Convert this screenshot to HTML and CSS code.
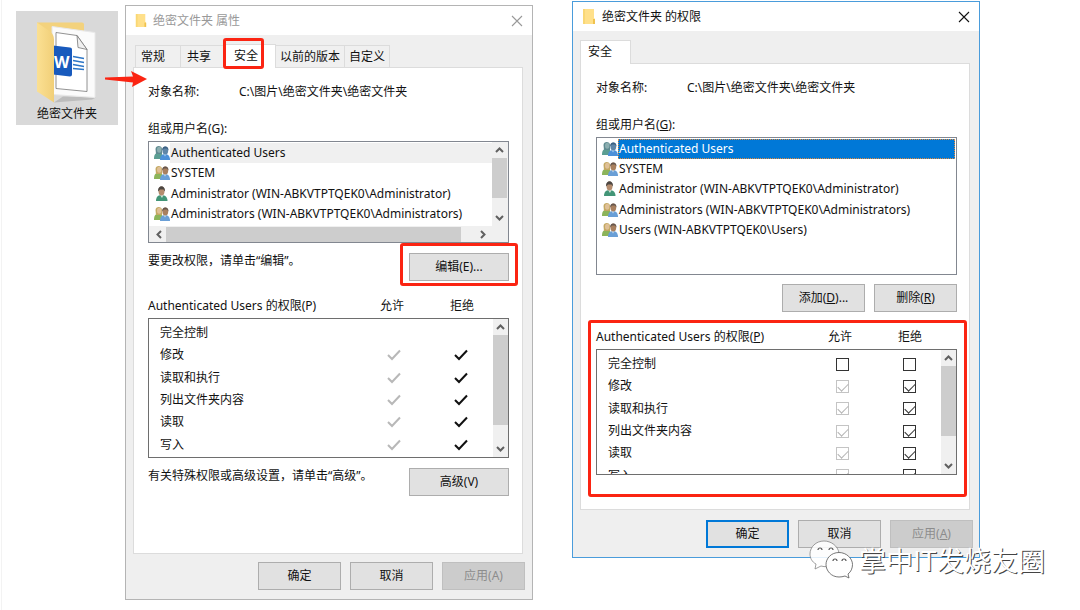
FILE: index.html
```html
<!DOCTYPE html>
<html lang="zh-CN">
<head>
<meta charset="utf-8">
<meta name="viewport" content="width=device-width, initial-scale=1">
<title>绝密文件夹 属性</title>
<link rel="stylesheet" href="styles.css">
</head>
<body>
<svg class="defs" aria-hidden="true">
  <symbol id="up" viewBox="0 0 15 16"><path d="M4 10 7.500 6.500 11 10" fill="none" stroke="#606060" stroke-width="2"/></symbol>
  <symbol id="down" viewBox="0 0 15 16"><path d="M4 6 7.500 9.500 11 6" fill="none" stroke="#606060" stroke-width="2"/></symbol>
  <symbol id="left" viewBox="0 0 16 15"><path d="M11 4 7.500 7.500 11 11" fill="none" stroke="#606060" stroke-width="2"/></symbol>
  <symbol id="right" viewBox="0 0 16 15"><path d="M6 4 9.500 7.500 6 11" fill="none" stroke="#606060" stroke-width="2"/></symbol>
  <symbol id="close" viewBox="0 0 12 12"><path d="M1 1 11 11M11 1 1 11" fill="none" stroke="currentColor" stroke-width="1.100"/></symbol>
  <symbol id="tick" viewBox="0 0 16 14"><path d="M2 7 6 11 14 2.500" fill="none" stroke="currentColor" stroke-width="2"/></symbol>
  <symbol id="folder" viewBox="0 0 14 15"><path d="M1 0h11v9l1 1v5H1z" fill="#ffe08a"/><path d="M1 0h2v15H1z" fill="#f9d775"/><path d="M11 10h2v5h-2z" fill="#f0c24e"/></symbol>
  <symbol id="group" viewBox="0 0 16 15">
    <path d="M0 14C0 10 1 8 4.500 8S9 9.500 9 14z" fill="#8cb45a"/>
    <path d="M1.500 4C1.500 0 8 0 8 4V9H2z" fill="#c3a862"/><ellipse cx="5.200" cy="4.800" rx="2.200" ry="3" fill="#dfc096"/>
    <path d="M6 15C6 11 8 9 11 9s5 2 5 6z" fill="#6a9fd6"/><path d="M9.500 9h3L11 11.500z" fill="#c6dcef"/>
    <ellipse cx="11.300" cy="5.500" rx="2.900" ry="3.900" fill="#a9805f"/><path d="M8.200 5.500C7.500 0 15 0 14.500 5.500L13 3.500H10z" fill="#66564d"/>
  </symbol>
  <symbol id="auth" viewBox="0 0 16 15">
    <path d="M0 14C0 10 1 8 4.500 8S9 9.500 9 14z" fill="#5b9e92"/>
    <path d="M1.500 4C1.500 0 8 0 8 4V9H2z" fill="#5f8a90"/><ellipse cx="5.200" cy="4.800" rx="2.200" ry="3" fill="#8caeb0"/>
    <path d="M6 15C6 11 8 9 11 9s5 2 5 6z" fill="#4c90d8"/><path d="M9.500 9h3L11 11.500z" fill="#a8cff0"/>
    <ellipse cx="11.300" cy="5.500" rx="2.900" ry="3.900" fill="#5f86a8"/><path d="M8.200 5.500C7.500 0 15 0 14.500 5.500L13 3.500H10z" fill="#3c6183"/>
  </symbol>
  <symbol id="user" viewBox="0 0 16 15">
    <path d="M2 15C2 11 4 9 7.500 9s6 2 6 6z" fill="#429577"/><path d="M6 9h3.500L8 12z" fill="#cfe6dc"/>
    <ellipse cx="7.500" cy="5" rx="3" ry="4.500" fill="#b48c6e"/><path d="M4 5.500C3.500-1.500 11.500-1.500 11 5.500L9.500 3.500H6z" fill="#4c4642"/>
  </symbol>
</svg>

<main class="stage">
  <figure class="tile">
    <svg class="tile-art" viewBox="0 0 102 93" aria-hidden="true">
      <defs><linearGradient id="flap" x1="0" x2="1"><stop offset="0" stop-color="#fbe093"/><stop offset="1" stop-color="#f1cf78"/></linearGradient></defs>
      <path d="M21 11h45q2 0 2 2v60H21z" fill="#f3d27d"/>
      <path d="M38 91 47 85 80 86 76 88z" fill="#bcbcbc"/>
      <path d="M36 15 79 21V86L37 83z" fill="#fbfbfb" stroke="#e9e9e9"/>
      <path d="M40 21 61 24 71 38V80L40 77z" fill="#fff" stroke="#777" stroke-width=".8"/>
      <path d="M61 24 62 36 71 38z" fill="#f0f0f0" stroke="#777" stroke-width=".8"/>
      <path d="M57 45 68 47M57 49 68 51M57 53 68 55M57 57 68 58" stroke="#2d76c7" stroke-width="1.300"/>
      <path d="M37 34 54 36q2 0 2 2V63q0 2-2 2L37 63z" fill="#185abd"/>
      <text x="38" y="56" class="word-mark">W</text>
      <path d="M21 11 34 20Q38 23 38 28V91L21 80z" fill="url(#flap)"/>
    </svg>
    <figcaption>绝密文件夹</figcaption>
    <svg class="arrow" viewBox="0 0 42 16" aria-hidden="true"><path d="M0 6.500 28 5.500 26 0 42 8 27 16 28 11.500 0 8.500z" fill="#fb2412"/></svg>
  </figure>

  <section class="dialog inactive" aria-labelledby="t1">
    <header class="titlebar">
      <svg class="folder small" aria-hidden="true"><use href="#folder"/></svg>
      <h1 id="t1">绝密文件夹 属性</h1>
      <button class="close" aria-label="关闭"><svg><use href="#close"/></svg></button>
    </header>
    <div class="tabs" role="tablist">
      <button class="tab" role="tab">常规</button>
      <button class="tab" role="tab">共享</button>
      <button class="tab active wide" role="tab" aria-selected="true">安全<span class="mark"></span></button>
      <button class="tab" role="tab">以前的版本</button>
      <button class="tab" role="tab">自定义</button>
    </div>
    <div class="panel">
      <div class="object"><span>对象名称:</span><span>C:\图片\绝密文件夹\绝密文件夹</span></div>
      <div class="list-label" id="g1">组或用户名(G):</div>
      <div class="list scrolls">
        <ul class="items" role="listbox" aria-labelledby="g1">
          <li class="dim" role="option" aria-selected="true"><svg><use href="#auth"/></svg><span>Authenticated Users</span></li>
          <li role="option"><svg><use href="#group"/></svg><span>SYSTEM</span></li>
          <li role="option"><svg><use href="#user"/></svg><span>Administrator (WIN-ABKVTPTQEK0\Administrator)</span></li>
          <li role="option"><svg><use href="#group"/></svg><span>Administrators (WIN-ABKVTPTQEK0\Administrators)</span></li>
        </ul>
        <div class="vbar"><svg><use href="#up"/></svg><i class="thumb half"></i><svg><use href="#down"/></svg></div>
        <div class="hbar"><svg><use href="#left"/></svg><i class="thumb"></i><svg><use href="#right"/></svg></div>
      </div>
      <div class="note-row"><p>要更改权限，请单击“编辑”。</p><button class="btn large">编辑(E)...<span class="mark"></span></button></div>
      <div class="perm">
        <div class="perm-head"><span id="p1">Authenticated Users 的权限(P)</span><span>允许</span><span>拒绝</span></div>
        <div class="perm-box">
          <table aria-labelledby="p1">
            <tr><th scope="row">完全控制</th><td></td><td></td></tr>
            <tr><th scope="row">修改</th><td><svg><use href="#tick"/></svg></td><td><svg><use href="#tick"/></svg></td></tr>
            <tr><th scope="row">读取和执行</th><td><svg><use href="#tick"/></svg></td><td><svg><use href="#tick"/></svg></td></tr>
            <tr><th scope="row">列出文件夹内容</th><td><svg><use href="#tick"/></svg></td><td><svg><use href="#tick"/></svg></td></tr>
            <tr><th scope="row">读取</th><td><svg><use href="#tick"/></svg></td><td><svg><use href="#tick"/></svg></td></tr>
            <tr><th scope="row">写入</th><td><svg><use href="#tick"/></svg></td><td><svg><use href="#tick"/></svg></td></tr>
          </table>
          <div class="vbar"><svg><use href="#up"/></svg><i class="thumb most"></i><svg><use href="#down"/></svg></div>
        </div>
      </div>
      <div class="note-row"><p>有关特殊权限或高级设置，请单击“高级”。</p><button class="btn large">高级(V)</button></div>
    </div>
    <footer class="actions">
      <button class="btn">确定</button><button class="btn">取消</button><button class="btn" disabled>应用(A)</button>
    </footer>
  </section>

  <section class="dialog focused" aria-labelledby="t2">
    <header class="titlebar">
      <svg class="folder" aria-hidden="true"><use href="#folder"/></svg>
      <h2 id="t2">绝密文件夹 的权限</h2>
      <button class="close" aria-label="关闭"><svg><use href="#close"/></svg></button>
    </header>
    <div class="tabs" role="tablist"><button class="tab active" role="tab" aria-selected="true">安全</button></div>
    <div class="panel">
      <div class="object"><span>对象名称:</span><span>C:\图片\绝密文件夹\绝密文件夹</span></div>
      <div class="list-label" id="g2">组或用户名(<u>G</u>):</div>
      <div class="list tall">
        <ul class="items" role="listbox" aria-labelledby="g2">
          <li class="selected" role="option" aria-selected="true"><svg><use href="#auth"/></svg><span>Authenticated Users</span></li>
          <li role="option"><svg><use href="#group"/></svg><span>SYSTEM</span></li>
          <li role="option"><svg><use href="#user"/></svg><span>Administrator (WIN-ABKVTPTQEK0\Administrator)</span></li>
          <li role="option"><svg><use href="#group"/></svg><span>Administrators (WIN-ABKVTPTQEK0\Administrators)</span></li>
          <li role="option"><svg><use href="#group"/></svg><span>Users (WIN-ABKVTPTQEK0\Users)</span></li>
        </ul>
      </div>
      <div class="list-actions"><button class="btn">添加(<u>D</u>)...</button><button class="btn">删除(<u>R</u>)</button></div>
      <div class="perm">
        <div class="perm-head"><span id="p2">Authenticated Users 的权限(<u>P</u>)</span><span>允许</span><span>拒绝</span></div>
        <div class="perm-box clipped">
          <table aria-labelledby="p2">
            <tr><th scope="row">完全控制</th><td><input type="checkbox" aria-label="完全控制 允许"></td><td><input type="checkbox" aria-label="完全控制 拒绝"></td></tr>
            <tr><th scope="row">修改</th><td><input type="checkbox" checked disabled aria-label="修改 允许"></td><td><input type="checkbox" checked aria-label="修改 拒绝"></td></tr>
            <tr><th scope="row">读取和执行</th><td><input type="checkbox" checked disabled aria-label="读取和执行 允许"></td><td><input type="checkbox" checked aria-label="读取和执行 拒绝"></td></tr>
            <tr><th scope="row">列出文件夹内容</th><td><input type="checkbox" checked disabled aria-label="列出文件夹内容 允许"></td><td><input type="checkbox" checked aria-label="列出文件夹内容 拒绝"></td></tr>
            <tr><th scope="row">读取</th><td><input type="checkbox" checked disabled aria-label="读取 允许"></td><td><input type="checkbox" checked aria-label="读取 拒绝"></td></tr>
            <tr><th scope="row">写入</th><td><input type="checkbox" checked disabled aria-label="写入 允许"></td><td><input type="checkbox" checked aria-label="写入 拒绝"></td></tr>
          </table>
          <div class="vbar"><svg><use href="#up"/></svg><i class="thumb most"></i><svg><use href="#down"/></svg></div>
        </div>
        <span class="mark"></span>
      </div>
    </div>
    <footer class="actions">
      <button class="btn primary">确定</button><button class="btn">取消</button><button class="btn" disabled>应用(<u>A</u>)</button>
    </footer>
  </section>

  <div class="watermark">
    <svg viewBox="0 0 44 40" aria-hidden="true">
      <path d="M15 1C7 1 1 7 1 14c0 4 2 8 6 10l-1 5 6-3c2 .6 4 .8 6 .6C29 27 31 20 30 13 29 6 22 1 15 1z" fill="#fff" fill-opacity=".85" stroke="#777" stroke-width=".7"/>
      <path d="M30 12.500c-8 0-13 6-13 12S22 37 30 37c2 0 4-.3 6-1l4 2-1-4c3-2 4.500-6 4.500-9.500 0-6-6-12-13.500-12z" fill="#fff" stroke="#555" stroke-width=".8"/>
      <path d="M9 10a2 2 0 0 1 4 0M20 10a2 2 0 0 1 4 0M24 21a2 2 0 0 1 4 0M33 21a2 2 0 0 1 4 0" fill="none" stroke="#555" stroke-width="1.200"/>
    </svg>
    <span>掌中IT发烧友圈</span>
  </div>
</main>
</body>
</html>
```

FILE: styles.css
```css
* {
  box-sizing: border-box;
}

body {
  margin: 0;
  background: #fff;
  color: #111;
  font: 12px/18px "Noto Sans", "Noto Sans CJK SC", sans-serif;
}

button,
input {
  margin: 0;
  font: inherit;
  color: inherit;
}

h1,
h2,
p,
ul,
figure {
  margin: 0;
  padding: 0;
  font: inherit;
}

.defs {
  position: absolute;
  width: 0;
  height: 0;
}

svg {
  display: block;
  flex: none;
}

.stage {
  position: relative;
  display: grid;
  grid-template-columns: 109px minmax(0, 1fr) 39px minmax(0, 1fr);
  align-items: start;
  min-height: 100vh;
  margin-left: 1px;
  padding: 1px 100px 9px 14px;
  border-left: 1px solid #f3f3f3;
}

/* Desktop icon */
.tile {
  position: relative;
  margin: 10px 7px 0 0;
  padding-bottom: 2px;
  background: #d9d9d9;
  text-align: center;
}

.tile-art {
  width: 100%;
  height: 94px;
}

.word-mark {
  font: bold 16px "Open Sans", sans-serif;
  fill: #fff;
}

.arrow {
  position: absolute;
  z-index: 1;
  top: 60px;
  left: 89px;
  width: 42px;
  height: 16px;
}

/* Dialogs */
.dialog {
  border: 1px solid #b4b4b4;
  background: #efefef;
}

.inactive {
  margin-top: 4px;
}

.focused {
  grid-column: 4;
  border-color: #4a9cdb;
}

.titlebar {
  display: flex;
  align-items: center;
  gap: 6px;
  height: 29px;
  padding: 0 8px 0 9px;
  background: #fff;
}

.inactive .titlebar {
  color: #999;
}

.folder {
  width: 14px;
  height: 15px;
}

.folder.small {
  width: 12px;
  height: 13px;
}

.close {
  display: grid;
  place-items: center;
  width: 14px;
  height: 14px;
  margin-left: auto;
  padding: 0;
  border: 0;
  background: none;
}

.close svg {
  width: 12px;
  height: 12px;
}

.tabs {
  display: flex;
  align-items: flex-end;
  padding: 9px 8px 0 9px;
}

.focused .tabs {
  padding-left: 7px;
}

.tab {
  position: relative;
  height: 22px;
  padding: 0 4px;
  border: 1px solid #dcdcdc;
  border-width: 1px 1px 0 0;
  background: #f0f0f0;
  white-space: nowrap;
}

.tab:first-child {
  padding: 0 15px 0 5px;
  border-left-width: 1px;
}

.tab:nth-child(2) {
  padding: 0 12px 0 6px;
  border-right: 0;
}

.tab.active {
  z-index: 1;
  height: 24px;
  margin-bottom: -1px;
  padding: 0 18px 1px 7px;
  background: #fff;
}

.tab.active.wide {
  padding: 0 17px 2px 11px;
}

.mark {
  position: absolute;
  border: 3px solid #fb2412;
  border-radius: 3px;
  pointer-events: none;
}

.tab .mark {
  inset: -7px 11px -1px 0;
}

.panel {
  margin: 0 9px 0 7px;
  padding: 15px 13px 57px 14px;
  border: 1px solid #dcdcdc;
  background: #fff;
}

.focused .panel {
  padding: 15px 12px 34px 15px;
}

.object {
  display: grid;
  grid-template-columns: 91px 1fr;
}

.list-label {
  margin: 19px 0 3px;
}

/* Account lists */
.list {
  border: 1px solid #828790;
  background: #fff;
}

.scrolls {
  display: grid;
  grid-template: 84px 16px / minmax(0, 1fr) 16px;
}

.tall {
  min-height: 138px;
  padding: 1px;
}

.items {
  display: grid;
  grid-auto-rows: 1fr;
  list-style: none;
}

.scrolls .items {
  padding: 1px 0 2px;
}

.tall .items {
  height: 101px;
}

.items li {
  display: flex;
  align-items: stretch;
  padding-left: 5px;
  white-space: nowrap;
}

.tall .items li {
  padding-left: 4px;
}

.items svg {
  width: 16px;
  height: 15px;
  margin-top: 2px;
}

.items span {
  flex: 1;
  display: flex;
  align-items: center;
  padding-left: 1px;
  min-width: 0;
}

.dim span {
  background: #f0f0f0;
}

.selected span {
  background: #0078d7;
  color: #fff;
  outline: 1px dotted #e08a3c;
  outline-offset: -1px;
}

/* Scroll bars */
.vbar {
  display: flex;
  flex-direction: column;
  justify-content: space-between;
  background: #f0f0f0;
}

.vbar svg {
  width: 15px;
  height: 16px;
}

.thumb {
  background: #cdcdcd;
  flex: 1;
}

.vbar .thumb {
  width: 15px;
}

.vbar .half {
  margin-bottom: 12px;
}

.vbar .most {
  margin-bottom: 16px;
}

.hbar {
  grid-column: 1 / -1;
  display: flex;
  padding: 1px 17px 0 1px;
  background: #f0f0f0;
}

.hbar svg {
  width: 16px;
  height: 15px;
}

.hbar .thumb {
  margin-right: 14px;
}

/* Notes and buttons */
.note-row {
  display: flex;
  justify-content: space-between;
  margin-top: 10px;
}

.note-row p {
  line-height: 16px;
}

.btn {
  position: relative;
  width: 83px;
  height: 28px;
  padding: 0;
  border: 1px solid #adadad;
  background: #e1e1e1;
  white-space: nowrap;
}

.btn.large {
  width: 100px;
}

.btn.primary {
  border: 2px solid #0078d7;
}

.btn:disabled {
  border-color: #bfbfbf;
  background: #ccc;
  color: #8c8c8c;
}

.btn .mark {
  inset: -11px -10px -6px;
}

.list-actions,
.actions {
  display: flex;
  justify-content: flex-end;
  gap: 9px;
}

.list-actions {
  margin-top: 9px;
}

.actions {
  padding: 8px 7px 9px;
}

.focused .actions {
  padding: 10px 6px 9px;
}

/* Permissions */
.perm {
  position: relative;
  margin-top: 16px;
}

.perm > .mark {
  inset: -8px -10px -22px -8px;
}

.perm-head {
  display: grid;
  grid-template-columns: minmax(0, 1fr) 70px 70px;
  padding-right: 12px;
  margin-bottom: 3px;
  text-align: center;
}

.perm-head span:first-child {
  text-align: left;
}

.perm-box {
  display: grid;
  grid-template-columns: minmax(0, 1fr) 15px;
  height: 140px;
  border: 1px solid #6e6e6e;
  overflow: hidden;
}

.perm-box.clipped {
  height: 126px;
}

.clipped .vbar {
  height: 124px;
}

.clipped .most {
  margin-bottom: 22px;
}

.perm table {
  width: 100%;
  height: 134px;
  margin-top: 3px;
  border-collapse: collapse;
  table-layout: fixed;
}

.perm th,
.perm td {
  padding: 0;
  vertical-align: middle;
}

.perm th {
  padding-left: 11px;
  font-weight: normal;
  text-align: left;
}

.perm td {
  width: 64px;
  color: #111;
}

.perm td:nth-child(2) {
  width: 70px;
  color: #b8b8b8;
}

.perm td svg {
  width: 16px;
  height: 14px;
  margin: 0 auto;
}

.perm input {
  display: block;
  width: 13px;
  height: 13px;
  margin: 0 auto;
  appearance: none;
  border: 1px solid #333;
  background: #fff;
  color: #333;
}

.perm input:checked::before {
  content: "";
  display: block;
  width: 9px;
  height: 5px;
  margin: 2px 0 0 1px;
  border: solid currentColor;
  border-width: 0 0 1px 1px;
  transform: rotate(-45deg);
}

.perm input:disabled {
  border-color: #c4c4c4;
  color: #b4b4b4;
}

/* Account badge */
.watermark {
  position: absolute;
  top: 540px;
  right: 35px;
  display: flex;
  align-items: center;
  gap: 6px;
  color: #fff;
  font: 27px/40px "Noto Sans CJK SC", sans-serif;
  text-shadow: 1px 1px 0 #444;
  white-space: nowrap;
}

.watermark svg {
  width: 44px;
  height: 40px;
}
```
